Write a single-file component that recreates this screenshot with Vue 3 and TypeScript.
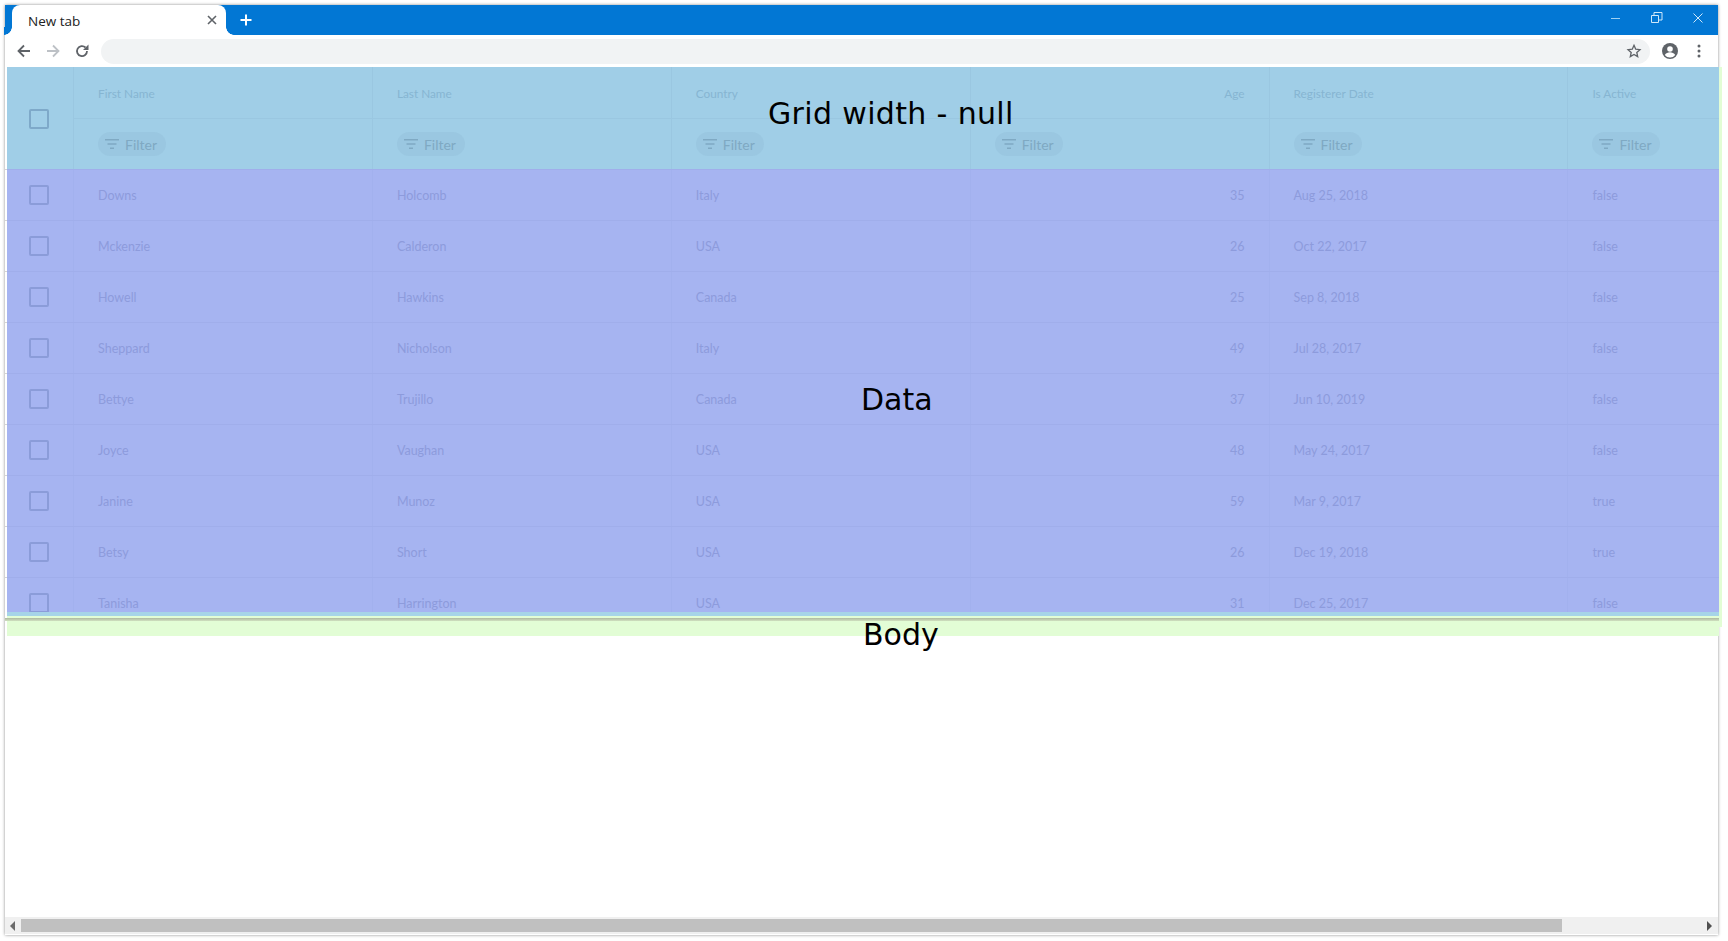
<script setup lang="ts">
interface Row { first: string; last: string; country: string; age: number; date: string; active: string }
const rows: Row[] = [
  { first: 'Downs', last: 'Holcomb', country: 'Italy', age: 35, date: 'Aug 25, 2018', active: 'false' },
  { first: 'Mckenzie', last: 'Calderon', country: 'USA', age: 26, date: 'Oct 22, 2017', active: 'false' },
  { first: 'Howell', last: 'Hawkins', country: 'Canada', age: 25, date: 'Sep 8, 2018', active: 'false' },
  { first: 'Sheppard', last: 'Nicholson', country: 'Italy', age: 49, date: 'Jul 28, 2017', active: 'false' },
  { first: 'Bettye', last: 'Trujillo', country: 'Canada', age: 37, date: 'Jun 10, 2019', active: 'false' },
  { first: 'Joyce', last: 'Vaughan', country: 'USA', age: 48, date: 'May 24, 2017', active: 'false' },
  { first: 'Janine', last: 'Munoz', country: 'USA', age: 59, date: 'Mar 9, 2017', active: 'true' },
  { first: 'Betsy', last: 'Short', country: 'USA', age: 26, date: 'Dec 19, 2018', active: 'true' },
  { first: 'Tanisha', last: 'Harrington', country: 'USA', age: 31, date: 'Dec 25, 2017', active: 'false' },
]
const cols: { label: string; right?: boolean }[] = [
  { label: 'First Name' },
  { label: 'Last Name' },
  { label: 'Country' },
  { label: 'Age', right: true },
  { label: 'Registerer Date' },
  { label: 'Is Active' },
]
</script>

<template>
  <div class="page">
    <div class="window">
      <div class="tabstrip">
        <div class="tab">
          <span class="tab-title">New tab</span>
          <svg class="tab-close" width="10" height="10" viewBox="0 0 10 10"><path d="M1 1l8 8M9 1l-8 8" stroke="#5f6368" stroke-width="1.6" fill="none" /></svg>
        </div>
        <svg class="plus" width="14" height="14" viewBox="0 0 14 14"><path d="M7 1.500v11M1.500 7h11" stroke="#fff" stroke-width="2" fill="none" /></svg>
        <div class="win-controls">
          <svg width="12" height="12" viewBox="0 0 12 12"><path d="M1 6.500h9" stroke="#9fd0f2" stroke-width="1" fill="none" /></svg>
          <svg width="12" height="12" viewBox="0 0 12 12"><path d="M.5 3.500h7v7h-7zM3 3.500v-3h8v7.500H7.500" stroke="#cfe8fa" stroke-width="1" fill="none" /></svg>
          <svg width="12" height="12" viewBox="0 0 12 12"><path d="M1.500 1.500l9 9M10.500 1.500l-9 9" stroke="#cfe8fa" stroke-width="1" fill="none" /></svg>
        </div>
      </div>
      <div class="toolbar">
        <svg class="nav" width="16" height="16" viewBox="0 0 16 16"><path d="M14 8H2.500M8 2.500L2.500 8 8 13.500" stroke="#5f6368" stroke-width="1.800" fill="none" /></svg>
        <svg class="nav" width="16" height="16" viewBox="0 0 16 16"><path d="M2 8h11.500M8 2.500L13.500 8 8 13.500" stroke="#bdc1c6" stroke-width="1.800" fill="none" /></svg>
        <svg class="nav" width="16" height="16" viewBox="0 0 16 16"><path d="M13 8a5 5 0 1 1-1.500-3.500" stroke="#5f6368" stroke-width="1.800" fill="none" /><path d="M14.500 1.500v5.500H9z" fill="#5f6368" /></svg>
        <div class="omnibox">
          <svg width="16" height="16" viewBox="0 0 24 24"><path d="M12 3.500l2.600 5.800 6.300.7-4.700 4.200 1.300 6.200L12 17.200l-5.500 3.200 1.300-6.200L3.100 10l6.300-.7z" stroke="#5f6368" stroke-width="2" fill="none" /></svg>
        </div>
        <svg class="account" width="18" height="18" viewBox="0 0 18 18"><circle cx="9" cy="9" r="8" fill="#5f6368" /><circle cx="9" cy="7" r="2.800" fill="#fff" /><path d="M3.800 13c1-1.900 3.200-2.700 5.200-2.700s4.200.8 5.200 2.700A6.500 6.500 0 0 1 9 15.500 6.500 6.500 0 0 1 3.800 13z" fill="#fff" /></svg>
        <svg class="dots" width="4" height="14" viewBox="0 0 4 14"><circle cx="2" cy="2" r="1.500" fill="#5f6368" /><circle cx="2" cy="7" r="1.500" fill="#5f6368" /><circle cx="2" cy="12" r="1.500" fill="#5f6368" /></svg>
      </div>

      <div class="viewport">
        <div class="body-area">
          <div class="grid">
            <div class="head">
              <div class="sel-head"><span class="check head-check"></span></div>
              <div v-for="c in cols" :key="c.label" class="head-col">
                <div class="label" :class="{ right: c.right }">{{ c.label }}</div>
                <div class="filter-cell">
                  <span class="pill">
                    <svg width="14" height="10" viewBox="0 0 14 10"><path d="M0 .800h14M2.500 5h9M5 9.200h4" stroke="#7fa9c3" stroke-width="1.600" fill="none" /></svg>
                    Filter
                  </span>
                </div>
              </div>
            </div>
            <div class="data">
              <div v-for="r in rows" :key="r.first" class="row">
                <div class="sel-cell"><span class="check"></span></div>
                <div class="cell">{{ r.first }}</div>
                <div class="cell">{{ r.last }}</div>
                <div class="cell">{{ r.country }}</div>
                <div class="cell right">{{ r.age }}</div>
                <div class="cell">{{ r.date }}</div>
                <div class="cell">{{ r.active }}</div>
              </div>
            </div>
            <div class="grid-foot"></div>
          </div>
          <div class="body-shadow"></div>
        </div>
        <div class="spacer"></div>
        <div class="scrollbar">
          <svg width="6" height="10" viewBox="0 0 6 10"><path d="M5 0v10L0 5z" fill="#6b6b6b" /></svg>
          <div class="track"><div class="thumb"></div></div>
          <svg width="6" height="10" viewBox="0 0 6 10"><path d="M1 0v10l5-5z" fill="#505050" /></svg>
        </div>

        <span class="note note-grid">Grid width - null</span>
        <span class="note note-data">Data</span>
        <span class="note note-body">Body</span>
      </div>
    </div>
  </div>
</template>

<style scoped>
.page {
  width: 1728px;
  height: 941px;
  box-sizing: border-box;
  padding: 5px 10px 6px 5px;
  background: #fff;
  overflow: hidden;
}
.window {
  height: 100%;
  display: flex;
  flex-direction: column;
  background: #fff;
  box-shadow: 0 0 3px rgba(0, 0, 0, 0.45);
}
.tabstrip {
  height: 30px;
  flex: none;
  background: #0277d4;
  display: flex;
  align-items: center;
  padding-left: 7px;
  padding-right: 14px;
}
.tab {
  position: relative;
  width: 214px;
  height: 30px;
  background: #fff;
  border-radius: 8px 8px 0 0;
  display: flex;
  align-items: center;
  justify-content: space-between;
  padding: 0 9px 0 16px;
  box-sizing: border-box;
}
.tab::before,
.tab::after {
  content: '';
  position: absolute;
  bottom: 0;
  width: 8px;
  height: 8px;
}
.tab::before {
  left: -8px;
  background: radial-gradient(circle at 0 0, #0277d4 7.5px, #fff 8px);
}
.tab::after {
  right: -8px;
  background: radial-gradient(circle at 100% 0, #0277d4 7.5px, #fff 8px);
}
.tab-title {
  font: 14px "Open Sans", sans-serif;
  font-size: 13.5px;
  color: #222;
  padding-top: 1px;
}
.plus {
  margin-left: 13px;
}
.win-controls {
  margin-left: auto;
  display: flex;
  gap: 29px;
  margin-top: -5px;
}
.toolbar {
  height: 32px;
  flex: none;
  display: flex;
  align-items: center;
  background: #fff;
  padding: 0 17px 0 11px;
  box-sizing: border-box;
}
.nav {
  margin-right: 13px;
}
.omnibox {
  margin-left: -2px;
  flex: 1;
  height: 25px;
  border-radius: 13px;
  background: #f1f3f4;
  display: flex;
  align-items: center;
  justify-content: flex-end;
  padding-right: 8px;
}
.account {
  margin-left: 11px;
}
.dots {
  margin-left: 18px;
}
.viewport {
  position: relative;
  flex: 1;
  min-height: 0;
  display: flex;
  flex-direction: column;
}
.body-area {
  position: relative;
  margin: 0 -1px 0 2px;
  padding: 0 0 15px;
  background: #e2fdd5;
}
.body-area::after {
  content: '';
  position: absolute;
  top: 0;
  right: -3px;
  width: 3px;
  height: 560px;
  background: #e2fdd5;
}
.grid {
  background: #a0cee7;
  font-family: Lato, "Open Sans", sans-serif;
  font-size: 12.5px;
}
.head {
  display: grid;
  grid-template-columns: 66px repeat(5, 298.9px) 1fr;
  height: 102px;
}
.sel-head {
  display: flex;
  align-items: center;
  padding: 2px 0 0 22px;
}
.head-col {
  border-left: 1px solid rgba(70, 110, 140, 0.06);
  display: flex;
  flex-direction: column;
}
.label {
  height: 52px;
  flex: none;
  box-sizing: border-box;
  border-bottom: 1px solid rgba(70, 110, 140, 0.06);
  padding: 2px 24px 0;
  display: flex;
  align-items: center;
  color: #86b5d2;
  font-size: 11.8px;
}
.label.right {
  justify-content: flex-end;
}
.filter-cell {
  flex: 1;
  padding-left: 24px;
  display: flex;
  align-items: center;
}
.pill {
  display: inline-flex;
  align-items: center;
  gap: 6px;
  box-sizing: border-box;
  width: 68px;
  height: 24px;
  padding-left: 7px;
  border-radius: 12px;
  background: rgba(70, 110, 140, 0.06);
  color: #7fa9c3;
  font-size: 14px;
}
.check {
  display: block;
  box-sizing: border-box;
  width: 20px;
  height: 20px;
  border: 2px solid #8b9cd9;
  border-radius: 2px;
}
.head-check {
  border-color: #7ea9c9;
}
.data {
  height: 443px;
  clip-path: inset(0 0 0 -2px);
  background: #a6b4f1;
}
.row {
  position: relative;
  display: grid;
  grid-template-columns: 66px repeat(5, 298.9px) 1fr;
  height: 51px;
  box-sizing: border-box;
  border-top: 1px solid rgba(60, 80, 160, 0.06);
}
.row::before {
  content: '';
  position: absolute;
  top: -1px;
  left: -2px;
  width: 2px;
  height: 1px;
  background: #d4d4d4;
}
.sel-cell {
  display: flex;
  align-items: center;
  padding-left: 22px;
}
.cell {
  border-left: 1px solid rgba(60, 80, 160, 0.03);
  padding: 0 24px;
  display: flex;
  align-items: center;
  color: #8d9bdc;
}
.cell.right {
  justify-content: flex-end;
}
.grid-foot {
  height: 4px;
  background: #a6d4e8;
}
.body-shadow {
  margin: 2px 0 0 -2px;
  height: 3px;
  background: linear-gradient(#aeb9a0, #cfe0bf);
}
.spacer {
  flex: 1;
}
.scrollbar {
  height: 17px;
  margin-bottom: 1px;
  flex: none;
  background: #f0f0f0;
  display: flex;
  align-items: center;
  padding: 0 6px 0 5px;
  box-sizing: border-box;
  gap: 5px;
}
.track {
  flex: 1;
  height: 13px;
}
.thumb {
  width: 1541px;
  height: 100%;
  background: #c0c0c0;
}
.note {
  position: absolute;
  font-family: "DejaVu Sans", sans-serif;
  color: #000;
  white-space: nowrap;
  line-height: 1;
}
.note-grid {
  left: 763px;
  top: 32px;
  font-size: 30px;
  letter-spacing: 0.35px;
}
.note-data {
  left: 856px;
  top: 318px;
  font-size: 30px;
}
.note-body {
  left: 858px;
  top: 553px;
  font-size: 30px;
}
</style>
